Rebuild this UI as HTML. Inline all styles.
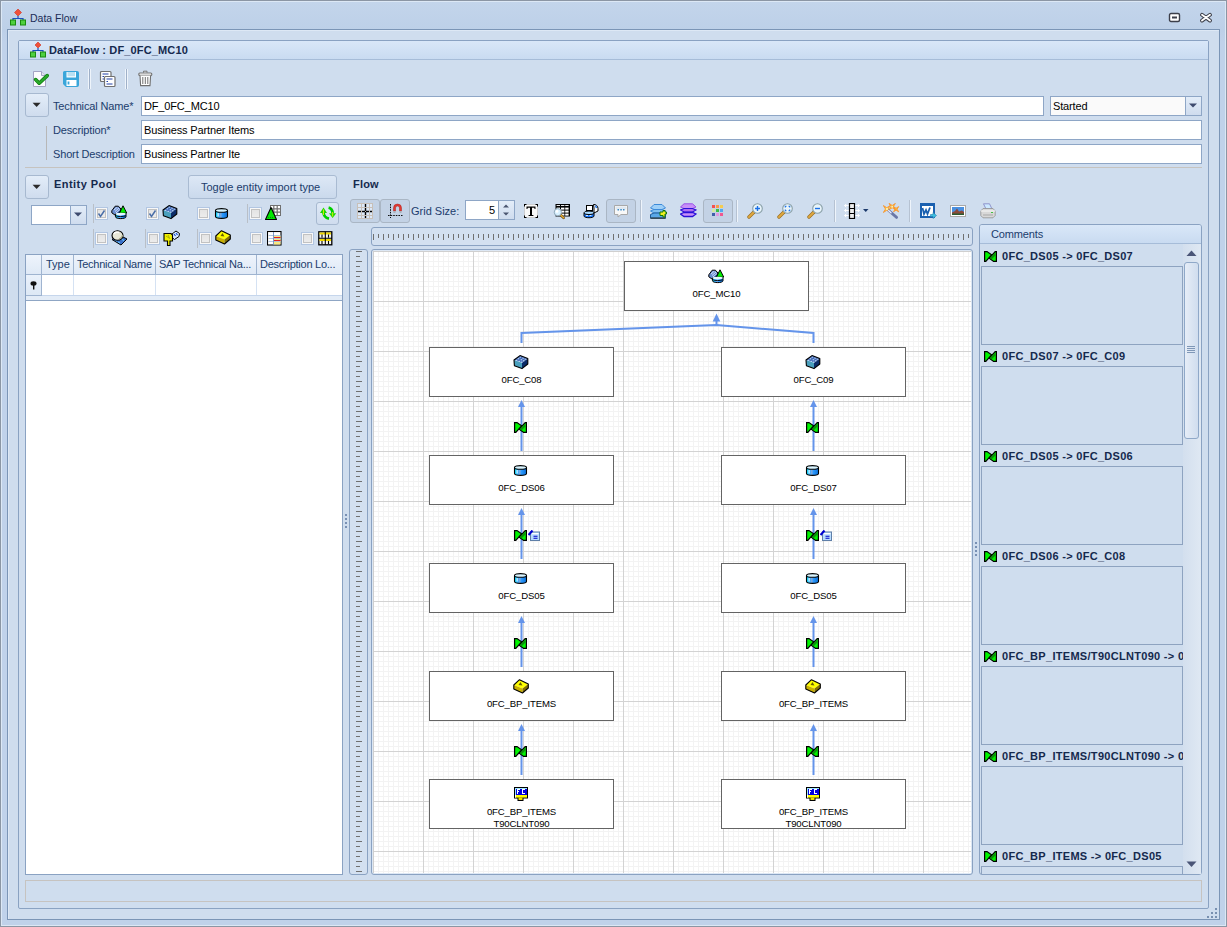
<!DOCTYPE html>
<html><head><meta charset="utf-8">
<style>
*{box-sizing:border-box;margin:0;padding:0}
html,body{width:1227px;height:927px;overflow:hidden;background:#cfddee;font-family:"Liberation Sans",sans-serif;font-size:11px;color:#203c6c}
.a{position:absolute}
.t{position:absolute;white-space:nowrap;line-height:15px}
.b{font-weight:bold}
.inp{position:absolute;background:#fff;border:1px solid #8ea6c6}
.sep{position:absolute;width:1px;background:#b9c3cf;border-right:1px solid #eef3f9}
.cb{position:absolute;width:13px;height:13px;border:1px solid #b2c6e2;background:linear-gradient(#e2e2e2,#eeeeee);box-shadow:inset 0 0 0 1px #f8f8f8,inset 0 0 0 2px #c2c2c2}
.btn{position:absolute;border:1px solid #a7b9d0;border-radius:3px;background:linear-gradient(#e3edf9,#cfdcee)}
.chk{position:absolute;border:1px solid #aab6c4;border-radius:3px;background:#c3d2e5}
.gh{letter-spacing:-0.25px}
.nl{font-size:9.6px;color:#000;line-height:12px;letter-spacing:-0.15px}
.ni{position:absolute;width:16px;height:16px}
.bt{position:absolute;width:13px;height:11px}
</style></head><body>

<svg width="0" height="0" style="position:absolute">
<defs>
<linearGradient id="g-cyl" x1="0" x2="1" y1="0" y2="0"><stop offset="0" stop-color="#10e8ff"/><stop offset="0.3" stop-color="#3aa8ff"/><stop offset="0.45" stop-color="#8aa8d8"/><stop offset="0.55" stop-color="#2e9cff"/><stop offset="1" stop-color="#0a6ed8"/></linearGradient>
<symbol id="i-bt" viewBox="0 0 13 11">
 <path d="M12.4 0.6 V10.4 H9.6 L5.2 7.2 L11.2 0.6Z" fill="#00f400" stroke="#000" stroke-width="1.2" stroke-linejoin="miter"/>
 <path d="M0.6 0.6 H3 L7.6 3.8 L1.8 10.4 H0.6Z" fill="#00f400" stroke="#000" stroke-width="1.2" stroke-linejoin="miter"/>
 <path d="M6 7 L11.4 1.4 V4.5 L7.5 8.5Z" fill="#0c8e0c"/>
</symbol>
<symbol id="i-cube" viewBox="0 0 16 16">
 <path d="M1 5 L7 0.6 L14.8 3.6 L9 7.8Z" fill="#3d66b6"/>
 <path d="M1 5 L9 7.8 L9 13.6 L1.4 10.7Z" fill="#4aa0bd"/>
 <path d="M9 7.8 L14.8 3.6 L14.8 9 L9 13.6Z" fill="#0c2c68"/>
 <g fill="#cfe6ff"><rect x="6.5" y="1.6" width="1.6" height="1"/><rect x="9.3" y="2.6" width="1.6" height="1"/><rect x="11.6" y="3.6" width="1.6" height="1"/><rect x="4.6" y="3.3" width="1.6" height="1"/><rect x="7.6" y="4.3" width="1.6" height="1"/><rect x="9.9" y="5.3" width="1.6" height="1"/><rect x="2.8" y="4.8" width="1.6" height="1"/><rect x="5.6" y="5.8" width="1.6" height="1"/><rect x="7.9" y="6.6" width="1.6" height="1"/></g>
 <path d="M1 5 L7 0.6 L14.8 3.6 L14.8 9 L9 13.6 L1.4 10.7Z" fill="none" stroke="#000" stroke-width="1.1" stroke-linejoin="round"/>
</symbol>
<symbol id="i-ds" viewBox="0 0 16 16">
 <path d="M1.5 4.5 V10.5 C1.5 13 13.5 13 13.5 10.5 V4.5Z" fill="url(#g-cyl)"/>
 <ellipse cx="7.5" cy="4.3" rx="6" ry="2" fill="#d8f4ff"/>
 <path d="M1.5 4.5 V10.5 C1.5 13 13.5 13 13.5 10.5 V4.5 C13.5 2 1.5 2 1.5 4.5Z M1.5 4.8 C1.5 6.8 13.5 6.8 13.5 4.8" fill="none" stroke="#000" stroke-width="1.1"/>
 <rect x="3.6" y="7" width="1" height="3.5" fill="#fff"/>
</symbol>
<symbol id="i-src" viewBox="0 0 16 16">
 <path d="M0.8 6 L6.5 0.7 L15.3 5 L9.5 9.5Z" fill="#ffff00"/>
 <path d="M0.8 6 L9.5 9.5 L9.5 14 L0.8 10Z" fill="#c9b000"/>
 <path d="M9.5 9.5 L15.3 5 L15.3 9 L9.5 14Z" fill="#857000"/>
 <path d="M5.5 6 L7.5 3 L9.5 6.5Z" fill="#6a6000"/>
 <path d="M0.8 6 L6.5 0.7 L15.3 5 L15.3 9 L9.5 14 L0.8 10Z" fill="none" stroke="#000" stroke-width="1.1" stroke-linejoin="round"/>
</symbol>
<symbol id="i-fc" viewBox="0 0 16 16">
 <path d="M1 0 H15 V11.5 H10.5 V14 H4.5 V11.5 H1Z" fill="#000"/>
 <rect x="2" y="1" width="12" height="7" fill="#0000e0"/>
 <rect x="2" y="1" width="12" height="1" fill="#a0e8ff"/>
 <rect x="2" y="1" width="1" height="7" fill="#a0e8ff"/>
 <rect x="2" y="8" width="12" height="2.6" fill="#ffff00"/>
 <rect x="5.5" y="10.5" width="4" height="2.5" fill="#f0e000"/>
 <rect x="2" y="8" width="1" height="2.6" fill="#fff"/>
 <g fill="#fff"><rect x="4" y="2" width="1" height="5"/><rect x="4" y="2" width="3" height="1"/><rect x="4" y="4" width="2" height="1"/>
 <rect x="9" y="2" width="1" height="5"/><rect x="9" y="2" width="3" height="1"/><rect x="9" y="6" width="3" height="1"/></g>
</symbol>
<symbol id="i-mc" viewBox="0 0 16 16">
 <path d="M0.8 5.8 L4.2 1.2 L7.4 1.2 L10 4 L9.2 8.6 L5.6 11.2 L0.8 7.8Z" fill="#6a8ed0"/>
 <path d="M5.6 11.2 L9.2 8.6 L10 4 L6 8Z" fill="#123a80"/>
 <path d="M3 5 L6.5 2 M4 6.5 L8 3 M5 8 L9 4.5" stroke="#dce8ff" stroke-width="0.9"/>
 <path d="M0.8 5.8 L4.2 1.2 L7.4 1.2 L10 4 L9.2 8.6 L5.6 11.2 L0.8 7.8Z" fill="none" stroke="#000" stroke-width="1"/>
 <path d="M12 0.8 L15.8 8.2 H8.4Z" fill="#00f000" stroke="#000" stroke-width="1" stroke-linejoin="round"/>
 <path d="M4.5 9 V11.8 C4.5 14.2 15 14.2 15 11.8 V9Z" fill="url(#g-cyl)" stroke="#000" stroke-width="1"/>
 <ellipse cx="9.75" cy="9.1" rx="5.1" ry="1.3" fill="#e4f8ff"/>
 <path d="M4.8 10.8 C7 11.8 12 11.8 14.7 10.8" stroke="#000" stroke-width="0.9" fill="none"/>
</symbol>
<symbol id="i-cmt" viewBox="0 0 12 11">
 <rect x="2.5" y="2" width="9" height="8.5" fill="#b8dcff" stroke="#5f7fa8"/>
 <rect x="3.5" y="3" width="7" height="1.2" fill="#fff"/>
 <path d="M0.5 5 L4.5 0.5" stroke="#0000d0" stroke-width="2.2"/>
 <path d="M5.5 6.2 H9.5 M5.5 8.2 H9.5" stroke="#0000c8" stroke-width="1.1"/>
</symbol>
</defs></svg>

<!-- window frame -->
<div class="a" style="left:0;top:0;width:1227px;height:927px;border:1px solid #8b96a4"></div>
<div class="a" style="left:1px;top:1px;width:1225px;height:925px;border:1px solid #dce8f5;background:linear-gradient(#c3d5eb,#bdd0e8 28px,#c0d2ea 40px)"></div>
<!-- title -->
<svg class="a" style="left:9px;top:8px" width="18" height="18" viewBox="0 0 18 18">
 <path d="M9 1 L12.5 4.5 L9 8 L5.5 4.5Z" fill="#f0503a" stroke="#d03020" stroke-width="0.6"/>
 <path d="M9 8 V10 M4 14 V10.5 H14 V14" stroke="#1a4fc0" stroke-width="1.2" fill="none"/>
 <rect x="1.5" y="12" width="5" height="5" fill="#4fd040" stroke="#1a8a10"/>
 <rect x="11.5" y="12" width="5" height="5" fill="#4fd040" stroke="#1a8a10"/>
</svg>
<div class="t" style="left:30px;top:11px;color:#1b2d57;font-size:10.5px">Data Flow</div>
<svg class="a" style="left:1168px;top:12px" width="13" height="11"><rect x="1.5" y="1.5" width="10" height="8" rx="1.5" fill="#fff" stroke="#3c3f4a" stroke-width="1.4"/><rect x="4" y="4.5" width="5" height="2" fill="#3c3f4a"/></svg>
<svg class="a" style="left:1199px;top:12px" width="14" height="11"><path d="M3 2.8 L11 8.6 M11 2.8 L3 8.6" stroke="#3c3f4a" stroke-width="3.8" stroke-linecap="round"/><path d="M3 2.8 L11 8.6 M11 2.8 L3 8.6" stroke="#fff" stroke-width="1.8" stroke-linecap="round"/></svg>

<!-- client area -->
<div class="a" style="left:7px;top:29px;width:1213px;height:891px;border:1px solid #7b95b6;background:#cfddee"></div>
<div class="a" style="left:8px;top:30px;width:1211px;height:889px;border-top:1px solid #dde8f5;border-left:1px solid #dde8f5"></div>

<!-- group panel -->
<div class="a" style="left:18px;top:40px;width:1191px;height:869px;border:1px solid #8aa2c2;border-radius:2px;background:#cfddee"></div>
<div class="a" style="left:19px;top:41px;width:1189px;height:19px;background:linear-gradient(#d9e7f8,#c9dbf1);border-bottom:1px solid #a6bcd8"></div>
<svg class="a" style="left:29px;top:41px" width="18" height="17" viewBox="0 0 18 17">
 <path d="M9 1 L12 4 L9 7 L6 4Z" fill="#f0503a" stroke="#d03020" stroke-width="0.6"/>
 <path d="M9 7 V9 M4 13 V9.5 H14 V13" stroke="#1a4fc0" stroke-width="1.2" fill="none"/>
 <rect x="1.5" y="11" width="5" height="5" fill="#4fd040" stroke="#1a8a10"/>
 <rect x="11.5" y="11" width="5" height="5" fill="#4fd040" stroke="#1a8a10"/>
</svg>
<div class="t b" style="left:49px;top:43px;color:#15294d;letter-spacing:0.15px">DataFlow : DF_0FC_MC10</div>

<!-- doc toolbar -->
<svg class="a" style="left:32px;top:70px" width="18" height="18" viewBox="0 0 18 18">
 <path d="M1.5 1.5 H9.5 L13.5 5.5 V16.5 H1.5Z" fill="#fbfbfd" stroke="#a3a3c3" stroke-width="1"/>
 <path d="M9.5 1.5 V5.5 H13.5" fill="#e6e6f0" stroke="#a3a3c3" stroke-width="1"/>
 <path d="M3.6 9.6 L7.2 13.2 L15.2 5.6" stroke="#0a7a0a" stroke-width="3.6" fill="none" stroke-linecap="round" stroke-linejoin="round"/>
 <path d="M3.6 9.6 L7.2 13.2 L15.2 5.6" stroke="#2aa82a" stroke-width="2.2" fill="none" stroke-linecap="round" stroke-linejoin="round"/>
</svg>
<svg class="a" style="left:62px;top:70px" width="18" height="18" viewBox="0 0 18 18">
 <path d="M2.5 1 H15 A2 2 0 0 1 17 3 V15 A2 2 0 0 1 15 17 H4 L1 14 V2.5 A1.5 1.5 0 0 1 2.5 1Z" fill="#3aa6da"/>
 <rect x="4.5" y="2" width="9.5" height="5.5" fill="#fff"/>
 <rect x="5.5" y="2" width="7.5" height="4.3" fill="#b9e0f2"/>
 <rect x="4.5" y="10" width="10" height="6" fill="#fff"/>
 <rect x="5.6" y="11.5" width="1.8" height="3" fill="#3aa6da"/>
</svg>
<div class="a" style="left:89px;top:69px;width:1px;height:20px;background:#9fb0c8;box-shadow:-1px 0 0 #eef4fb,1px 0 0 #eef4fb"></div>
<svg class="a" style="left:99px;top:70px" width="18" height="18" viewBox="0 0 18 18">
 <rect x="1.5" y="1.5" width="10.5" height="10" rx="1" fill="#fff" stroke="#707070" stroke-width="1.2"/>
 <path d="M3.5 4 H9.5 M3.5 6.5 H5 M3.5 9 H5" stroke="#2040a8" stroke-width="1.1"/>
 <rect x="5.5" y="6.5" width="10.5" height="10" rx="1" fill="#fff" stroke="#707070" stroke-width="1.2"/>
 <path d="M7.5 9 H13.5 M7.5 11.5 H9 M7.5 14 H13.5" stroke="#2040a8" stroke-width="1.1"/>
</svg>
<div class="a" style="left:126px;top:69px;width:1px;height:20px;background:#9fb0c8;box-shadow:-1px 0 0 #eef4fb,1px 0 0 #eef4fb"></div>
<svg class="a" style="left:137px;top:70px" width="17" height="17" viewBox="0 0 17 17">
 <path d="M6.5 2.6 V1.2 H10 V2.6" fill="#fff" stroke="#707070" stroke-width="1"/>
 <rect x="1.8" y="3" width="13" height="2.4" rx="1" fill="#fff" stroke="#707070" stroke-width="1.1"/>
 <path d="M3 5.5 L3.6 15.6 H13 L13.6 5.5" fill="#fff" stroke="#707070" stroke-width="1.1"/>
 <path d="M5.8 7 V14 M8.3 7 V14 M10.8 7 V14" stroke="#707070" stroke-width="1"/>
</svg>


<!-- form -->
<div class="btn" style="left:25px;top:93px;width:24px;height:24px"></div>
<svg class="a" style="left:32px;top:102px" width="10" height="6"><path d="M0.6 0.8 H8.6 L4.6 5Z" fill="#2b2b2b"/></svg>
<div class="t" style="left:53px;top:99px;letter-spacing:-0.15px">Technical Name*</div>
<div class="a" style="left:46px;top:126px;width:1px;height:34px;background:#b7b7b7"></div>
<div class="t" style="left:53px;top:123px;letter-spacing:-0.15px">Description*</div>
<div class="t" style="left:53px;top:147px;letter-spacing:-0.15px">Short Description</div>
<div class="inp" style="left:141px;top:96px;width:903px;height:20px"></div>
<div class="t" style="left:144px;top:99px;color:#000;letter-spacing:-0.15px">DF_0FC_MC10</div>
<div class="inp" style="left:1050px;top:96px;width:152px;height:20px;background:#fafafa"></div>
<div class="a" style="left:1185px;top:97px;width:16px;height:18px;border-left:1px solid #8ea6c6;background:linear-gradient(#e3edf9,#cfdcee)"></div>
<svg class="a" style="left:1188px;top:103px" width="10" height="6"><path d="M1 0.5 H9 L5 4.5Z" fill="#3d4a6e"/></svg>
<div class="t" style="left:1053px;top:99px;color:#000;letter-spacing:-0.15px">Started</div>
<div class="inp" style="left:141px;top:120px;width:1061px;height:20px"></div>
<div class="t" style="left:144px;top:123px;color:#000;letter-spacing:-0.15px">Business Partner Items</div>
<div class="inp" style="left:141px;top:144px;width:1061px;height:20px"></div>
<div class="t" style="left:144px;top:147px;color:#000;letter-spacing:-0.15px">Business Partner Ite</div>
<div class="a" style="left:25px;top:167px;width:1177px;height:1px;background:#c6c3bf"></div>

<!-- entity pool -->
<div class="btn" style="left:25px;top:175px;width:24px;height:24px"></div>
<svg class="a" style="left:32px;top:184px" width="10" height="6"><path d="M0.6 0.8 H8.6 L4.6 5Z" fill="#2b2b2b"/></svg>
<div class="t b" style="left:54px;top:177px;color:#15294d;letter-spacing:0.45px">Entity Pool</div>
<div class="btn" style="left:188px;top:175px;width:149px;height:24px;border-color:#a9bbd2;background:linear-gradient(#dde8f6,#cad9ec)"></div>
<div class="t" style="left:201px;top:180px;color:#203c6c">Toggle entity import type</div>
<!-- combo -->
<div class="inp" style="left:31px;top:205px;width:56px;height:20px"></div>
<div class="a" style="left:70px;top:206px;width:16px;height:18px;border-left:1px solid #8ea6c6;background:linear-gradient(#e3edf9,#cfdcee)"></div>
<svg class="a" style="left:73px;top:212px" width="10" height="6"><path d="M1 0.5 H9 L5 4.5Z" fill="#3d4a6e"/></svg>
<div class="a" style="left:93px;top:204px;width:1px;height:19px;background:#b9bfc7"></div>
<div class="a" style="left:93px;top:229px;width:1px;height:19px;background:#b9bfc7"></div>
<div class="a" style="left:145px;top:229px;width:1px;height:19px;background:#b9bfc7"></div>
<div class="a" style="left:197px;top:229px;width:1px;height:19px;background:#b9bfc7"></div>
<div class="a" style="left:247px;top:204px;width:1px;height:19px;background:#b9bfc7"></div>
<!-- row1 checkboxes -->
<div class="cb" style="left:95px;top:207px"></div>
<svg class="a" style="left:97px;top:209px" width="9" height="9"><path d="M1.5 4.5 L3.5 7.5 L7.5 1.5" stroke="#4a6ea8" stroke-width="1.5" fill="none"/></svg>
<div class="cb" style="left:146px;top:207px"></div>
<svg class="a" style="left:148px;top:209px" width="9" height="9"><path d="M1.5 4.5 L3.5 7.5 L7.5 1.5" stroke="#4a6ea8" stroke-width="1.5" fill="none"/></svg>
<div class="cb" style="left:197px;top:207px"></div>
<div class="cb" style="left:249px;top:207px"></div>
<!-- row2 -->
<div class="cb" style="left:95px;top:232px"></div>
<div class="cb" style="left:147px;top:232px"></div>
<div class="cb" style="left:199px;top:232px"></div>
<div class="cb" style="left:250px;top:232px"></div>
<div class="cb" style="left:301px;top:232px"></div>
<!-- icons -->
<svg class="a" style="left:111px;top:205px" width="16" height="16"><use href="#i-mc"/></svg>
<svg class="a" style="left:162px;top:205px" width="16" height="16"><use href="#i-cube"/></svg>
<svg class="a" style="left:214px;top:206px" width="16" height="16"><use href="#i-ds"/></svg>
<svg class="a" style="left:265px;top:205px" width="16" height="16" viewBox="0 0 16 16">
 <rect x="5.5" y="0.5" width="10" height="10" fill="#fff" stroke="#707070"/>
 <path d="M8.8 0.5V10.5 M12.2 0.5V10.5 M5.5 3.8H15.5 M5.5 7.2H15.5" stroke="#707070" stroke-width="1.2"/>
 <path d="M6 2.5 L11.5 14.5 H0.5Z" fill="#00e800" stroke="#000" stroke-width="1.1" stroke-linejoin="round"/>
 <path d="M3 12.5 H9.5" stroke="#108010" stroke-width="1.2" stroke-dasharray="1 1"/>
</svg>
<svg class="a" style="left:111px;top:230px" width="16" height="16" viewBox="0 0 16 16">
 <path d="M1 9.5 L10 15 L16 9 L8 5Z" fill="#3a70c8" stroke="#000" stroke-width="1"/>
 <path d="M4 10 L6 11.2 M7 12 L9 13 M8 8 L10 9 M11 9.5 L13 10.5" stroke="#70d0ff" stroke-width="1"/>
 <ellipse cx="6.5" cy="5.5" rx="5.5" ry="4.8" fill="#e8e8d8" stroke="#000" stroke-width="1.1"/>
 <path d="M3 4 A3.5 3 0 0 1 8 2.5" stroke="#fff" stroke-width="1.4" fill="none"/>
 <path d="M8 9 A5 4.5 0 0 0 11.5 5" stroke="#a8a888" stroke-width="1.2" fill="none"/>
</svg>
<svg class="a" style="left:163px;top:230px" width="17" height="17" viewBox="0 0 17 17">
 <path d="M9 4 L13 1 L16.5 3.5 L16 6.5 L11.5 9.5 L8.5 7Z" fill="#d8e8ff" stroke="#000" stroke-width="1"/>
 <path d="M11 4 L12.5 6 M13 3 L14.5 5" stroke="#1a50d0" stroke-width="1.2"/>
 <path d="M1 3.5 H8 L9.5 5 V11 H7 V15.5 H4.5 V11 H1Z" fill="#f0f000" stroke="#000" stroke-width="1.1"/>
 <path d="M3 6 L6 8 M5 5 L7 9" stroke="#a0a000" stroke-width="0.8"/>
</svg>
<svg class="a" style="left:215px;top:230px" width="16" height="16"><use href="#i-src"/></svg>
<svg class="a" style="left:267px;top:231px" width="15" height="15" viewBox="0 0 15 15">
 <rect x="0.5" y="0.5" width="13.5" height="13.5" fill="#fff" stroke="#000" stroke-width="1.1"/>
 <rect x="7" y="5" width="6.5" height="8.5" fill="#f8e880"/>
 <path d="M1.5 4.5H13.5 M1.5 7.5H13.5 M1.5 10.5H13.5" stroke="#a8c0e0" stroke-width="0.9"/>
 <path d="M7 6.5H13.5 M7 9.5H13.5" stroke="#e02020" stroke-width="1.1"/>
 <path d="M6.5 1V14" stroke="#7090c0" stroke-width="0.9"/>
</svg>
<svg class="a" style="left:318px;top:231px" width="15" height="15" viewBox="0 0 15 15">
 <rect x="0.8" y="0.8" width="13" height="13" fill="#f4f4f4" stroke="#000" stroke-width="1.3"/>
 <rect x="1.5" y="1.5" width="11.5" height="2" fill="#f0d800"/>
 <rect x="1.5" y="8" width="11.5" height="2" fill="#f0d800"/>
 <path d="M7.3 0.8V14 M0.8 7.3H14 M4 3.5 V6.5 M10.5 3.5 V6.5 M4 10 V13 M10.5 10 V13" stroke="#000" stroke-width="1.1"/>
</svg>

<div class="btn" style="left:316px;top:202px;width:23px;height:23px;background:linear-gradient(#dfe9f6,#cfdcee)"></div>
<svg class="a" style="left:319px;top:205px" width="18" height="17" viewBox="0 0 18 17">
 <path d="M4.5 7.5 Q4.8 12.5 10 13.6" stroke="#00d000" stroke-width="2.8" fill="none"/>
 <path d="M4.5 2.6 L1 8 H8Z" fill="#20d800"/>
 <path d="M4.5 4.5 V10" stroke="#c8f000" stroke-width="1"/>
 <path d="M9.6 2.6 Q13.6 3.5 13.6 8.5" stroke="#00d000" stroke-width="2.8" fill="none"/>
 <path d="M13.6 13 L17.2 8.2 H10Z" fill="#20d800"/>
 <path d="M13.6 7 V11.5" stroke="#c8f000" stroke-width="1"/>
</svg>
<!-- grid -->
<div class="a" style="left:25px;top:254px;width:318px;height:621px;border:1px solid #8aa2c2;background:#fff"></div>
<div class="a" style="left:26px;top:255px;width:316px;height:20px;background:linear-gradient(#eef4fc,#dfe9f6);border-bottom:1px solid #9fb4d0"></div>
<div class="a" style="left:26px;top:275px;width:16px;height:21px;background:linear-gradient(#eaf1fb,#dde8f5);border-right:1px solid #9fb4d0;border-bottom:1px solid #9fb4d0"></div>
<div class="a" style="left:41px;top:255px;width:1px;height:20px;background:#9fb4d0"></div>
<div class="a" style="left:73px;top:255px;width:1px;height:20px;background:#9fb4d0"></div>
<div class="a" style="left:155px;top:255px;width:1px;height:20px;background:#9fb4d0"></div>
<div class="a" style="left:256px;top:255px;width:1px;height:20px;background:#9fb4d0"></div>
<div class="a" style="left:73px;top:275px;width:1px;height:20px;background:#d5e2f3"></div>
<div class="a" style="left:155px;top:275px;width:1px;height:20px;background:#d5e2f3"></div>
<div class="a" style="left:256px;top:275px;width:1px;height:20px;background:#d5e2f3"></div>
<div class="a" style="left:42px;top:295px;width:300px;height:1px;background:#c6d6ec"></div>
<div class="a" style="left:26px;top:296px;width:316px;height:5px;background:#e3ecf7;border-bottom:1px solid #8fa6c4"></div>
<div class="t" style="left:46px;top:257px">Type</div>
<div class="t gh" style="left:77px;top:257px">Technical Name</div>
<div class="t gh" style="left:159px;top:257px">SAP Technical Na...</div>
<div class="t gh" style="left:260px;top:257px">Description Lo...</div>
<svg class="a" style="left:30px;top:281px" width="7" height="9"><ellipse cx="3.5" cy="2.5" rx="3" ry="2.2" fill="#111"/><rect x="3" y="3" width="1.4" height="5.5" fill="#111"/></svg>


<!-- flow -->
<div class="t b" style="left:353px;top:177px;color:#15294d;letter-spacing:0.2px">Flow</div>
<div class="chk" style="left:350px;top:199px;width:30px;height:24px"></div>
<div class="chk" style="left:380px;top:199px;width:30px;height:24px"></div>
<div class="chk" style="left:606px;top:199px;width:30px;height:24px"></div>
<div class="chk" style="left:703px;top:199px;width:30px;height:24px"></div>
<div class="t" style="left:411px;top:204px;color:#203c6c">Grid Size:</div>
<div class="inp" style="left:465px;top:200px;width:50px;height:20px"></div>
<div class="a" style="left:498px;top:201px;width:16px;height:18px;border-left:1px solid #8ea6c6;background:linear-gradient(#e3edf9,#cfdcee)"></div>
<svg class="a" style="left:502px;top:203px" width="8" height="14"><path d="M1 4.5 L4 1.5 L7 4.5Z M1 9.5 L4 12.5 L7 9.5Z" fill="#4a5670"/></svg>
<div class="t" style="left:489px;top:203px;color:#000">5</div>
<div class="a" style="left:640px;top:200px;width:1px;height:22px;background:#b6c2d2;box-shadow:1px 0 0 #eef4fb"></div>
<div class="a" style="left:736px;top:200px;width:1px;height:22px;background:#b6c2d2;box-shadow:1px 0 0 #eef4fb"></div>
<div class="a" style="left:834px;top:200px;width:1px;height:22px;background:#b6c2d2;box-shadow:1px 0 0 #eef4fb"></div>
<div class="a" style="left:909px;top:200px;width:1px;height:22px;background:#b6c2d2;box-shadow:1px 0 0 #eef4fb"></div>
<div class="a" style="left:371px;top:227px;width:602px;height:19px;border:1px solid #8aa2c2;border-radius:3px;background:#d3e0f0"></div>
<svg class="a" style="left:371px;top:227px" width="602" height="19"><g fill="#707070"><rect x="2" y="7" width="1" height="6"/><rect x="7" y="7" width="1" height="4"/><rect x="12" y="7" width="1" height="6"/><rect x="17" y="7" width="1" height="4"/><rect x="22" y="7" width="1" height="6"/><rect x="27" y="7" width="1" height="4"/><rect x="32" y="7" width="1" height="6"/><rect x="37" y="7" width="1" height="4"/><rect x="42" y="7" width="1" height="6"/><rect x="47" y="7" width="1" height="4"/><rect x="52" y="7" width="1" height="6"/><rect x="57" y="7" width="1" height="4"/><rect x="62" y="7" width="1" height="6"/><rect x="67" y="7" width="1" height="4"/><rect x="72" y="7" width="1" height="6"/><rect x="77" y="7" width="1" height="4"/><rect x="82" y="7" width="1" height="6"/><rect x="87" y="7" width="1" height="4"/><rect x="92" y="7" width="1" height="6"/><rect x="97" y="7" width="1" height="4"/><rect x="102" y="7" width="1" height="6"/><rect x="107" y="7" width="1" height="4"/><rect x="112" y="7" width="1" height="6"/><rect x="117" y="7" width="1" height="4"/><rect x="122" y="7" width="1" height="6"/><rect x="127" y="7" width="1" height="4"/><rect x="132" y="7" width="1" height="6"/><rect x="137" y="7" width="1" height="4"/><rect x="142" y="7" width="1" height="6"/><rect x="147" y="7" width="1" height="4"/><rect x="152" y="7" width="1" height="6"/><rect x="157" y="7" width="1" height="4"/><rect x="162" y="7" width="1" height="6"/><rect x="167" y="7" width="1" height="4"/><rect x="172" y="7" width="1" height="6"/><rect x="177" y="7" width="1" height="4"/><rect x="182" y="7" width="1" height="6"/><rect x="187" y="7" width="1" height="4"/><rect x="192" y="7" width="1" height="6"/><rect x="197" y="7" width="1" height="4"/><rect x="202" y="7" width="1" height="6"/><rect x="207" y="7" width="1" height="4"/><rect x="212" y="7" width="1" height="6"/><rect x="217" y="7" width="1" height="4"/><rect x="222" y="7" width="1" height="6"/><rect x="227" y="7" width="1" height="4"/><rect x="232" y="7" width="1" height="6"/><rect x="237" y="7" width="1" height="4"/><rect x="242" y="7" width="1" height="6"/><rect x="247" y="7" width="1" height="4"/><rect x="252" y="7" width="1" height="6"/><rect x="257" y="7" width="1" height="4"/><rect x="262" y="7" width="1" height="6"/><rect x="267" y="7" width="1" height="4"/><rect x="272" y="7" width="1" height="6"/><rect x="277" y="7" width="1" height="4"/><rect x="282" y="7" width="1" height="6"/><rect x="287" y="7" width="1" height="4"/><rect x="292" y="7" width="1" height="6"/><rect x="297" y="7" width="1" height="4"/><rect x="302" y="7" width="1" height="6"/><rect x="307" y="7" width="1" height="4"/><rect x="312" y="7" width="1" height="6"/><rect x="317" y="7" width="1" height="4"/><rect x="322" y="7" width="1" height="6"/><rect x="327" y="7" width="1" height="4"/><rect x="332" y="7" width="1" height="6"/><rect x="337" y="7" width="1" height="4"/><rect x="342" y="7" width="1" height="6"/><rect x="347" y="7" width="1" height="4"/><rect x="352" y="7" width="1" height="6"/><rect x="357" y="7" width="1" height="4"/><rect x="362" y="7" width="1" height="6"/><rect x="367" y="7" width="1" height="4"/><rect x="372" y="7" width="1" height="6"/><rect x="377" y="7" width="1" height="4"/><rect x="382" y="7" width="1" height="6"/><rect x="387" y="7" width="1" height="4"/><rect x="392" y="7" width="1" height="6"/><rect x="397" y="7" width="1" height="4"/><rect x="402" y="7" width="1" height="6"/><rect x="407" y="7" width="1" height="4"/><rect x="412" y="7" width="1" height="6"/><rect x="417" y="7" width="1" height="4"/><rect x="422" y="7" width="1" height="6"/><rect x="427" y="7" width="1" height="4"/><rect x="432" y="7" width="1" height="6"/><rect x="437" y="7" width="1" height="4"/><rect x="442" y="7" width="1" height="6"/><rect x="447" y="7" width="1" height="4"/><rect x="452" y="7" width="1" height="6"/><rect x="457" y="7" width="1" height="4"/><rect x="462" y="7" width="1" height="6"/><rect x="467" y="7" width="1" height="4"/><rect x="472" y="7" width="1" height="6"/><rect x="477" y="7" width="1" height="4"/><rect x="482" y="7" width="1" height="6"/><rect x="487" y="7" width="1" height="4"/><rect x="492" y="7" width="1" height="6"/><rect x="497" y="7" width="1" height="4"/><rect x="502" y="7" width="1" height="6"/><rect x="507" y="7" width="1" height="4"/><rect x="512" y="7" width="1" height="6"/><rect x="517" y="7" width="1" height="4"/><rect x="522" y="7" width="1" height="6"/><rect x="527" y="7" width="1" height="4"/><rect x="532" y="7" width="1" height="6"/><rect x="537" y="7" width="1" height="4"/><rect x="542" y="7" width="1" height="6"/><rect x="547" y="7" width="1" height="4"/><rect x="552" y="7" width="1" height="6"/><rect x="557" y="7" width="1" height="4"/><rect x="562" y="7" width="1" height="6"/><rect x="567" y="7" width="1" height="4"/><rect x="572" y="7" width="1" height="6"/><rect x="577" y="7" width="1" height="4"/><rect x="582" y="7" width="1" height="6"/><rect x="587" y="7" width="1" height="4"/><rect x="592" y="7" width="1" height="6"/><rect x="597" y="7" width="1" height="4"/></g></svg>
<div class="a" style="left:349px;top:249px;width:19px;height:626px;border:1px solid #8aa2c2;border-radius:3px;background:#d3e0f0"></div>
<svg class="a" style="left:349px;top:249px" width="19" height="626"><g fill="#707070"><rect x="7" y="2" width="6" height="1"/><rect x="7" y="7" width="4" height="1"/><rect x="7" y="12" width="6" height="1"/><rect x="7" y="17" width="4" height="1"/><rect x="7" y="22" width="6" height="1"/><rect x="7" y="27" width="4" height="1"/><rect x="7" y="32" width="6" height="1"/><rect x="7" y="37" width="4" height="1"/><rect x="7" y="42" width="6" height="1"/><rect x="7" y="47" width="4" height="1"/><rect x="7" y="52" width="6" height="1"/><rect x="7" y="57" width="4" height="1"/><rect x="7" y="62" width="6" height="1"/><rect x="7" y="67" width="4" height="1"/><rect x="7" y="72" width="6" height="1"/><rect x="7" y="77" width="4" height="1"/><rect x="7" y="82" width="6" height="1"/><rect x="7" y="87" width="4" height="1"/><rect x="7" y="92" width="6" height="1"/><rect x="7" y="97" width="4" height="1"/><rect x="7" y="102" width="6" height="1"/><rect x="7" y="107" width="4" height="1"/><rect x="7" y="112" width="6" height="1"/><rect x="7" y="117" width="4" height="1"/><rect x="7" y="122" width="6" height="1"/><rect x="7" y="127" width="4" height="1"/><rect x="7" y="132" width="6" height="1"/><rect x="7" y="137" width="4" height="1"/><rect x="7" y="142" width="6" height="1"/><rect x="7" y="147" width="4" height="1"/><rect x="7" y="152" width="6" height="1"/><rect x="7" y="157" width="4" height="1"/><rect x="7" y="162" width="6" height="1"/><rect x="7" y="167" width="4" height="1"/><rect x="7" y="172" width="6" height="1"/><rect x="7" y="177" width="4" height="1"/><rect x="7" y="182" width="6" height="1"/><rect x="7" y="187" width="4" height="1"/><rect x="7" y="192" width="6" height="1"/><rect x="7" y="197" width="4" height="1"/><rect x="7" y="202" width="6" height="1"/><rect x="7" y="207" width="4" height="1"/><rect x="7" y="212" width="6" height="1"/><rect x="7" y="217" width="4" height="1"/><rect x="7" y="222" width="6" height="1"/><rect x="7" y="227" width="4" height="1"/><rect x="7" y="232" width="6" height="1"/><rect x="7" y="237" width="4" height="1"/><rect x="7" y="242" width="6" height="1"/><rect x="7" y="247" width="4" height="1"/><rect x="7" y="252" width="6" height="1"/><rect x="7" y="257" width="4" height="1"/><rect x="7" y="262" width="6" height="1"/><rect x="7" y="267" width="4" height="1"/><rect x="7" y="272" width="6" height="1"/><rect x="7" y="277" width="4" height="1"/><rect x="7" y="282" width="6" height="1"/><rect x="7" y="287" width="4" height="1"/><rect x="7" y="292" width="6" height="1"/><rect x="7" y="297" width="4" height="1"/><rect x="7" y="302" width="6" height="1"/><rect x="7" y="307" width="4" height="1"/><rect x="7" y="312" width="6" height="1"/><rect x="7" y="317" width="4" height="1"/><rect x="7" y="322" width="6" height="1"/><rect x="7" y="327" width="4" height="1"/><rect x="7" y="332" width="6" height="1"/><rect x="7" y="337" width="4" height="1"/><rect x="7" y="342" width="6" height="1"/><rect x="7" y="347" width="4" height="1"/><rect x="7" y="352" width="6" height="1"/><rect x="7" y="357" width="4" height="1"/><rect x="7" y="362" width="6" height="1"/><rect x="7" y="367" width="4" height="1"/><rect x="7" y="372" width="6" height="1"/><rect x="7" y="377" width="4" height="1"/><rect x="7" y="382" width="6" height="1"/><rect x="7" y="387" width="4" height="1"/><rect x="7" y="392" width="6" height="1"/><rect x="7" y="397" width="4" height="1"/><rect x="7" y="402" width="6" height="1"/><rect x="7" y="407" width="4" height="1"/><rect x="7" y="412" width="6" height="1"/><rect x="7" y="417" width="4" height="1"/><rect x="7" y="422" width="6" height="1"/><rect x="7" y="427" width="4" height="1"/><rect x="7" y="432" width="6" height="1"/><rect x="7" y="437" width="4" height="1"/><rect x="7" y="442" width="6" height="1"/><rect x="7" y="447" width="4" height="1"/><rect x="7" y="452" width="6" height="1"/><rect x="7" y="457" width="4" height="1"/><rect x="7" y="462" width="6" height="1"/><rect x="7" y="467" width="4" height="1"/><rect x="7" y="472" width="6" height="1"/><rect x="7" y="477" width="4" height="1"/><rect x="7" y="482" width="6" height="1"/><rect x="7" y="487" width="4" height="1"/><rect x="7" y="492" width="6" height="1"/><rect x="7" y="497" width="4" height="1"/><rect x="7" y="502" width="6" height="1"/><rect x="7" y="507" width="4" height="1"/><rect x="7" y="512" width="6" height="1"/><rect x="7" y="517" width="4" height="1"/><rect x="7" y="522" width="6" height="1"/><rect x="7" y="527" width="4" height="1"/><rect x="7" y="532" width="6" height="1"/><rect x="7" y="537" width="4" height="1"/><rect x="7" y="542" width="6" height="1"/><rect x="7" y="547" width="4" height="1"/><rect x="7" y="552" width="6" height="1"/><rect x="7" y="557" width="4" height="1"/><rect x="7" y="562" width="6" height="1"/><rect x="7" y="567" width="4" height="1"/><rect x="7" y="572" width="6" height="1"/><rect x="7" y="577" width="4" height="1"/><rect x="7" y="582" width="6" height="1"/><rect x="7" y="587" width="4" height="1"/><rect x="7" y="592" width="6" height="1"/><rect x="7" y="597" width="4" height="1"/><rect x="7" y="602" width="6" height="1"/><rect x="7" y="607" width="4" height="1"/><rect x="7" y="612" width="6" height="1"/><rect x="7" y="617" width="4" height="1"/><rect x="7" y="622" width="6" height="1"/></g></svg>
<svg class="a" style="left:345px;top:514px" width="3" height="15"><g fill="#7890b4"><rect x="0" y="0" width="2" height="2"/><rect x="0" y="4" width="2" height="2"/><rect x="0" y="8" width="2" height="2"/><rect x="0" y="12" width="2" height="2"/></g></svg>
<svg class="a" style="left:975px;top:542px" width="3" height="15"><g fill="#7890b4"><rect x="0" y="0" width="2" height="2"/><rect x="0" y="4" width="2" height="2"/><rect x="0" y="8" width="2" height="2"/><rect x="0" y="12" width="2" height="2"/></g></svg>
<div class="a" style="left:371px;top:249px;width:602px;height:626px;border:1px solid #8aa2c2;border-radius:3px;background:#dce7f4"></div>
<svg class="a" style="left:373px;top:251px" width="598" height="622"><rect width="598" height="622" fill="#fff"/><path d="M5.5 0V622M10.5 0V622M15.5 0V622M20.5 0V622M25.5 0V622M30.5 0V622M35.5 0V622M40.5 0V622M45.5 0V622M55.5 0V622M60.5 0V622M65.5 0V622M70.5 0V622M75.5 0V622M80.5 0V622M85.5 0V622M90.5 0V622M95.5 0V622M105.5 0V622M110.5 0V622M115.5 0V622M120.5 0V622M125.5 0V622M130.5 0V622M135.5 0V622M140.5 0V622M145.5 0V622M155.5 0V622M160.5 0V622M165.5 0V622M170.5 0V622M175.5 0V622M180.5 0V622M185.5 0V622M190.5 0V622M195.5 0V622M205.5 0V622M210.5 0V622M215.5 0V622M220.5 0V622M225.5 0V622M230.5 0V622M235.5 0V622M240.5 0V622M245.5 0V622M255.5 0V622M260.5 0V622M265.5 0V622M270.5 0V622M275.5 0V622M280.5 0V622M285.5 0V622M290.5 0V622M295.5 0V622M305.5 0V622M310.5 0V622M315.5 0V622M320.5 0V622M325.5 0V622M330.5 0V622M335.5 0V622M340.5 0V622M345.5 0V622M355.5 0V622M360.5 0V622M365.5 0V622M370.5 0V622M375.5 0V622M380.5 0V622M385.5 0V622M390.5 0V622M395.5 0V622M405.5 0V622M410.5 0V622M415.5 0V622M420.5 0V622M425.5 0V622M430.5 0V622M435.5 0V622M440.5 0V622M445.5 0V622M455.5 0V622M460.5 0V622M465.5 0V622M470.5 0V622M475.5 0V622M480.5 0V622M485.5 0V622M490.5 0V622M495.5 0V622M505.5 0V622M510.5 0V622M515.5 0V622M520.5 0V622M525.5 0V622M530.5 0V622M535.5 0V622M540.5 0V622M545.5 0V622M555.5 0V622M560.5 0V622M565.5 0V622M570.5 0V622M575.5 0V622M580.5 0V622M585.5 0V622M590.5 0V622M595.5 0V622M0 5.5H598M0 10.5H598M0 15.5H598M0 20.5H598M0 25.5H598M0 30.5H598M0 35.5H598M0 40.5H598M0 45.5H598M0 55.5H598M0 60.5H598M0 65.5H598M0 70.5H598M0 75.5H598M0 80.5H598M0 85.5H598M0 90.5H598M0 95.5H598M0 105.5H598M0 110.5H598M0 115.5H598M0 120.5H598M0 125.5H598M0 130.5H598M0 135.5H598M0 140.5H598M0 145.5H598M0 155.5H598M0 160.5H598M0 165.5H598M0 170.5H598M0 175.5H598M0 180.5H598M0 185.5H598M0 190.5H598M0 195.5H598M0 205.5H598M0 210.5H598M0 215.5H598M0 220.5H598M0 225.5H598M0 230.5H598M0 235.5H598M0 240.5H598M0 245.5H598M0 255.5H598M0 260.5H598M0 265.5H598M0 270.5H598M0 275.5H598M0 280.5H598M0 285.5H598M0 290.5H598M0 295.5H598M0 305.5H598M0 310.5H598M0 315.5H598M0 320.5H598M0 325.5H598M0 330.5H598M0 335.5H598M0 340.5H598M0 345.5H598M0 355.5H598M0 360.5H598M0 365.5H598M0 370.5H598M0 375.5H598M0 380.5H598M0 385.5H598M0 390.5H598M0 395.5H598M0 405.5H598M0 410.5H598M0 415.5H598M0 420.5H598M0 425.5H598M0 430.5H598M0 435.5H598M0 440.5H598M0 445.5H598M0 455.5H598M0 460.5H598M0 465.5H598M0 470.5H598M0 475.5H598M0 480.5H598M0 485.5H598M0 490.5H598M0 495.5H598M0 505.5H598M0 510.5H598M0 515.5H598M0 520.5H598M0 525.5H598M0 530.5H598M0 535.5H598M0 540.5H598M0 545.5H598M0 555.5H598M0 560.5H598M0 565.5H598M0 570.5H598M0 575.5H598M0 580.5H598M0 585.5H598M0 590.5H598M0 595.5H598M0 605.5H598M0 610.5H598M0 615.5H598M0 620.5H598" stroke="#f3f3f3" stroke-width="1"/><path d="M0.5 0V622M50.5 0V622M100.5 0V622M150.5 0V622M200.5 0V622M250.5 0V622M300.5 0V622M350.5 0V622M400.5 0V622M450.5 0V622M500.5 0V622M550.5 0V622M0 0.5H598M0 50.5H598M0 100.5H598M0 150.5H598M0 200.5H598M0 250.5H598M0 300.5H598M0 350.5H598M0 400.5H598M0 450.5H598M0 500.5H598M0 550.5H598M0 600.5H598" stroke="#d3d3d3" stroke-width="1"/><path d="M0.5 0V622M0 0.5H598" stroke="#cfcfcf"/><rect x="251.5" y="10.5" width="184" height="49" fill="#fff" stroke="#646464"/><rect x="56.5" y="96.5" width="184" height="49" fill="#fff" stroke="#646464"/><rect x="348.5" y="96.5" width="184" height="49" fill="#fff" stroke="#646464"/><rect x="56.5" y="204.5" width="184" height="49" fill="#fff" stroke="#646464"/><rect x="348.5" y="204.5" width="184" height="49" fill="#fff" stroke="#646464"/><rect x="56.5" y="312.5" width="184" height="49" fill="#fff" stroke="#646464"/><rect x="348.5" y="312.5" width="184" height="49" fill="#fff" stroke="#646464"/><rect x="56.5" y="420.5" width="184" height="49" fill="#fff" stroke="#646464"/><rect x="348.5" y="420.5" width="184" height="49" fill="#fff" stroke="#646464"/><rect x="56.5" y="528.5" width="184" height="49" fill="#fff" stroke="#646464"/><rect x="348.5" y="528.5" width="184" height="49" fill="#fff" stroke="#646464"/><path d="M148.5 200V154" stroke="#6494ea" stroke-width="2"/><path d="M148.5 149 L152.0 156 L145.0 156Z" fill="#6494ea"/><path d="M148.5 308V262" stroke="#6494ea" stroke-width="2"/><path d="M148.5 257 L152.0 264 L145.0 264Z" fill="#6494ea"/><path d="M148.5 416V370" stroke="#6494ea" stroke-width="2"/><path d="M148.5 365 L152.0 372 L145.0 372Z" fill="#6494ea"/><path d="M148.5 524V478" stroke="#6494ea" stroke-width="2"/><path d="M148.5 473 L152.0 480 L145.0 480Z" fill="#6494ea"/><path d="M440.5 200V154" stroke="#6494ea" stroke-width="2"/><path d="M440.5 149 L444.0 156 L437.0 156Z" fill="#6494ea"/><path d="M440.5 308V262" stroke="#6494ea" stroke-width="2"/><path d="M440.5 257 L444.0 264 L437.0 264Z" fill="#6494ea"/><path d="M440.5 416V370" stroke="#6494ea" stroke-width="2"/><path d="M440.5 365 L444.0 372 L437.0 372Z" fill="#6494ea"/><path d="M440.5 524V478" stroke="#6494ea" stroke-width="2"/><path d="M440.5 473 L444.0 480 L437.0 480Z" fill="#6494ea"/><path d="M148.5 92V82L343.5 74L440.5 82V92" stroke="#6494ea" stroke-width="2" fill="none" stroke-linejoin="miter"/><path d="M343.5 74V67" stroke="#6494ea" stroke-width="2"/><path d="M343.5 62.5 L347.3 70.5 L339.7 70.5Z" fill="#6494ea"/></svg>
<div class="t nl" style="left:624px;width:185px;top:288px;text-align:center">0FC_MC10</div>
<svg class="a" style="left:708px;top:269px" width="16" height="16"><use href="#i-mc"/></svg>
<div class="t nl" style="left:429px;width:185px;top:374px;text-align:center">0FC_C08</div>
<svg class="a" style="left:513px;top:355px" width="16" height="16"><use href="#i-cube"/></svg>
<div class="t nl" style="left:721px;width:185px;top:374px;text-align:center">0FC_C09</div>
<svg class="a" style="left:805px;top:355px" width="16" height="16"><use href="#i-cube"/></svg>
<div class="t nl" style="left:429px;width:185px;top:482px;text-align:center">0FC_DS06</div>
<svg class="a" style="left:513px;top:463px" width="16" height="16"><use href="#i-ds"/></svg>
<div class="t nl" style="left:721px;width:185px;top:482px;text-align:center">0FC_DS07</div>
<svg class="a" style="left:805px;top:463px" width="16" height="16"><use href="#i-ds"/></svg>
<div class="t nl" style="left:429px;width:185px;top:590px;text-align:center">0FC_DS05</div>
<svg class="a" style="left:513px;top:571px" width="16" height="16"><use href="#i-ds"/></svg>
<div class="t nl" style="left:721px;width:185px;top:590px;text-align:center">0FC_DS05</div>
<svg class="a" style="left:805px;top:571px" width="16" height="16"><use href="#i-ds"/></svg>
<div class="t nl" style="left:429px;width:185px;top:698px;text-align:center">0FC_BP_ITEMS</div>
<svg class="a" style="left:513px;top:679px" width="16" height="16"><use href="#i-src"/></svg>
<div class="t nl" style="left:721px;width:185px;top:698px;text-align:center">0FC_BP_ITEMS</div>
<svg class="a" style="left:805px;top:679px" width="16" height="16"><use href="#i-src"/></svg>
<div class="t nl" style="left:429px;width:185px;top:806px;text-align:center">0FC_BP_ITEMS</div>
<div class="t nl" style="left:429px;width:185px;top:818px;text-align:center">T90CLNT090</div>
<svg class="a" style="left:513px;top:787px" width="16" height="16"><use href="#i-fc"/></svg>
<div class="t nl" style="left:721px;width:185px;top:806px;text-align:center">0FC_BP_ITEMS</div>
<div class="t nl" style="left:721px;width:185px;top:818px;text-align:center">T90CLNT090</div>
<svg class="a" style="left:805px;top:787px" width="16" height="16"><use href="#i-fc"/></svg>
<svg class="a" style="left:514px;top:422px" width="13" height="11"><use href="#i-bt"/></svg>
<svg class="a" style="left:514px;top:530px" width="13" height="11"><use href="#i-bt"/></svg>
<svg class="a" style="left:528px;top:530px" width="12" height="11"><use href="#i-cmt"/></svg>
<svg class="a" style="left:514px;top:638px" width="13" height="11"><use href="#i-bt"/></svg>
<svg class="a" style="left:514px;top:746px" width="13" height="11"><use href="#i-bt"/></svg>
<svg class="a" style="left:806px;top:422px" width="13" height="11"><use href="#i-bt"/></svg>
<svg class="a" style="left:806px;top:530px" width="13" height="11"><use href="#i-bt"/></svg>
<svg class="a" style="left:820px;top:530px" width="12" height="11"><use href="#i-cmt"/></svg>
<svg class="a" style="left:806px;top:638px" width="13" height="11"><use href="#i-bt"/></svg>
<svg class="a" style="left:806px;top:746px" width="13" height="11"><use href="#i-bt"/></svg><!-- grid snap -->
<svg class="a" style="left:357px;top:203px" width="16" height="16" viewBox="0 0 16 16">
 <rect x="0.5" y="0.5" width="15" height="15" fill="#dce8f7" stroke="#c8c0b8"/>
 <path d="M4.5 0V16 M8.5 0V16 M12.5 0V16 M0 4.5H16 M0 8.5H16 M0 12.5H16" stroke="#c8c0b8"/>
 <path d="M8.5 1V15 M1 8.5H15" stroke="#000" stroke-width="1.4" stroke-dasharray="3 1"/>
</svg>
<!-- magnet -->
<svg class="a" style="left:387px;top:203px" width="16" height="16" viewBox="0 0 16 16">
 <path d="M3.5 1V15 M1 12.5H15.5" stroke="#111" stroke-width="1" stroke-dasharray="1.6 1"/>
 <path d="M6.5 8 V5 A4 4 0 0 1 14.5 5 V8 H12.5 V5 A2 2 0 0 0 8.5 5 V8Z" fill="#e43a30" stroke="#a82020" stroke-width="0.5"/>
 <rect x="6.5" y="8" width="2" height="2" fill="#a8b0b8"/><rect x="12.5" y="8" width="2" height="2" fill="#a8b0b8"/>
</svg>
<!-- T -->
<svg class="a" style="left:524px;top:204px" width="14" height="14" viewBox="0 0 14 14">
 <rect x="0.5" y="0.5" width="13" height="13" fill="#f8f8f8" stroke="#c8c8c8" stroke-width="0.8"/>
 <path d="M0 0H2.5V1H1V2.5H0Z M14 0H11.5V1H13V2.5H14Z M0 14H2.5V13H1V11.5H0Z M14 14H11.5V13H13V11.5H14Z" fill="#000"/>
 <path d="M2.5 2.5 H11.5 V5 H10.6 L10.2 3.8 H8 V11 H9.4 V12 H4.6 V11 H6 V3.8 H3.8 L3.4 5 H2.5Z" fill="#000"/>
</svg>
<!-- table magnifier -->
<svg class="a" style="left:553px;top:203px" width="17" height="17" viewBox="0 0 17 17">
 <rect x="2.5" y="1" width="14.5" height="12.5" fill="#000"/>
 <rect x="3.6" y="4.6" width="3.4" height="2" fill="#fff"/><rect x="3.6" y="7.6" width="3.4" height="2" fill="#fff"/><rect x="3.6" y="10.6" width="3.4" height="2" fill="#fff"/><rect x="3.6" y="2" width="3.4" height="1" fill="#e8e8e8"/><rect x="8" y="4.6" width="3.4" height="2" fill="#fff"/><rect x="8" y="7.6" width="3.4" height="2" fill="#fff"/><rect x="8" y="10.6" width="3.4" height="2" fill="#fff"/><rect x="8" y="2" width="3.4" height="1" fill="#e8e8e8"/><rect x="12.2" y="4.6" width="3.4" height="2" fill="#fff"/><rect x="12.2" y="7.6" width="3.4" height="2" fill="#fff"/><rect x="12.2" y="10.6" width="3.4" height="2" fill="#fff"/><rect x="12.2" y="2" width="3.4" height="1" fill="#e8e8e8"/>
 <path d="M7.6 11.8 L10.6 14.8" stroke="#604010" stroke-width="2.6" stroke-linecap="round"/>
 <path d="M7.6 11.8 L10.6 14.8" stroke="#e0a830" stroke-width="1.5" stroke-linecap="round"/>
 <circle cx="4.8" cy="9.2" r="3.6" fill="#d8f0ff" stroke="#90a8b8" stroke-width="1"/>
 <circle cx="4" cy="8.4" r="1.4" fill="#fff"/>
</svg>
<!-- db printer -->
<svg class="a" style="left:583px;top:203px" width="16" height="16" viewBox="0 0 16 16">
 <path d="M10.5 1.5 A4 4 0 0 1 15 5.5 V8 L11 10 V5Z" fill="#fff" stroke="#000" stroke-width="1"/>
 <path d="M12.5 2.5 L13.5 5" stroke="#1a70e8" stroke-width="1.4"/>
 <rect x="3.5" y="2.5" width="6" height="5" fill="#fff" stroke="#000" stroke-width="1"/>
 <path d="M1 10 V13 C1 15.3 11 15.3 11 13 V10Z" fill="#1a78ff" stroke="#000" stroke-width="1"/>
 <ellipse cx="6" cy="9.8" rx="5" ry="1.8" fill="#a8d8ff" stroke="#000" stroke-width="1"/>
 <path d="M3 12.5 H5 M6.5 12.5 H8.5" stroke="#cfe8ff" stroke-width="1"/>
</svg>
<!-- comment bubble -->
<svg class="a" style="left:613px;top:204px" width="16" height="14" viewBox="0 0 16 14">
 <path d="M1.5 1.5 H14.5 V10.5 H8 L5 13 V10.5 H1.5Z" fill="#f8f8f8" stroke="#a8a8a8" stroke-width="1"/>
 <rect x="2.5" y="2.5" width="11" height="3" fill="#e0e8f0"/>
 <rect x="4.5" y="5" width="1.5" height="1.5" fill="#3a8ac8"/><rect x="7.3" y="5" width="1.5" height="1.5" fill="#3a8ac8"/><rect x="10" y="5" width="1.5" height="1.5" fill="#3a8ac8"/>
</svg>
<!-- layers add -->
<svg class="a" style="left:650px;top:203px" width="17" height="16" viewBox="0 0 17 16">
 <path d="M4 1.5 H12 L15.5 5 L12 6.5 H4 L0.5 5Z" fill="#9fd0f8" stroke="#3c8ad8" stroke-width="1"/>
 <path d="M0.5 8 L4 6.5 H12 L15.5 8 L12 10 H4Z" fill="#80c0f0" stroke="#3c8ad8" stroke-width="1"/>
 <path d="M0.5 11.5 L4 10 H12 L15.5 11.5 V15.2 H0.5Z" fill="#5aa8e8" stroke="#1e5a98" stroke-width="1"/>
 <rect x="0.5" y="14.5" width="15" height="1.2" fill="#303838"/>
 <path d="M10 9 H13 V7.5 H15 V9 H16.5 V11 H15 V14 H13 V12.5 H10Z" fill="#f0f020" stroke="#107810" stroke-width="1"/>
</svg>
<!-- purple layers -->
<svg class="a" style="left:680px;top:203px" width="17" height="15" viewBox="0 0 17 15">
 <path d="M4 0.8 H12.5 L16 4 L12.5 5.5 H4 L0.5 4Z" fill="#c890f8" stroke="#9a50e8" stroke-width="1"/>
 <path d="M0.5 7 L4 5.5 H12.5 L16 7 L12.5 9 H4Z" fill="#b070f0" stroke="#2a10d8" stroke-width="1.1"/>
 <path d="M0.5 11 L4 9.5 H12.5 L16 11 L12.5 13.5 H4Z" fill="#c890f8" stroke="#2a10d8" stroke-width="1.3"/>
</svg>
<!-- color grid -->
<svg class="a" style="left:712px;top:205px" width="12" height="12"><rect x="0" y="0" width="3" height="3" fill="#f45050"/><rect x="4" y="0" width="3" height="3" fill="#fa9a48"/><rect x="8" y="0" width="3" height="3" fill="#f4cc50"/><rect x="0" y="4" width="3" height="3" fill="#d4eaa0"/><rect x="4" y="4" width="3" height="3" fill="#38c048"/><rect x="8" y="4" width="3" height="3" fill="#50a8f0"/><rect x="0" y="8" width="3" height="3" fill="#4060a8"/><rect x="4" y="8" width="3" height="3" fill="#e098e0"/><rect x="8" y="8" width="3" height="3" fill="#f05890"/></svg>
<!-- zoom in / fit / out -->
<svg class="a" style="left:747px;top:203px" width="17" height="16" viewBox="0 0 17 16">
 <path d="M2 14 L7 9" stroke="#9a7020" stroke-width="3.4" stroke-linecap="round"/><path d="M2 14 L7 9" stroke="#e0a840" stroke-width="2" stroke-linecap="round"/>
 <circle cx="10.5" cy="5.5" r="4.8" fill="#e8f4fa" stroke="#8aa0a8" stroke-width="1.1"/>
 <path d="M8 5.5 H13 M10.5 3 V8" stroke="#1a70e8" stroke-width="1.4"/>
</svg>
<svg class="a" style="left:777px;top:203px" width="17" height="16" viewBox="0 0 17 16">
 <path d="M2 14 L7 9" stroke="#9a7020" stroke-width="3.4" stroke-linecap="round"/><path d="M2 14 L7 9" stroke="#e0a840" stroke-width="2" stroke-linecap="round"/>
 <circle cx="10.5" cy="5.5" r="4.8" fill="#e8f4fa" stroke="#8aa0a8" stroke-width="1.1"/>
 <path d="M8.3 4.5 V3.3 H9.5 M11.5 3.3 H12.7 V4.5 M12.7 6.5 V7.7 H11.5 M9.5 7.7 H8.3 V6.5" stroke="#1a70e8" stroke-width="1.1" fill="none"/>
</svg>
<svg class="a" style="left:807px;top:203px" width="17" height="16" viewBox="0 0 17 16">
 <path d="M2 14 L7 9" stroke="#9a7020" stroke-width="3.4" stroke-linecap="round"/><path d="M2 14 L7 9" stroke="#e0a840" stroke-width="2" stroke-linecap="round"/>
 <circle cx="10.5" cy="5.5" r="4.8" fill="#e8f4fa" stroke="#8aa0a8" stroke-width="1.1"/>
 <path d="M8 5.5 H13" stroke="#1a70e8" stroke-width="1.4"/>
</svg>
<!-- layout -->
<svg class="a" style="left:844px;top:203px" width="26" height="16" viewBox="0 0 26 16">
 <g stroke="#fff" stroke-width="1" fill="none"><path d="M0.5 2.6H5 M11 2.6H15.5 M0.5 7.5H5 M11 7.5H15.5 M0.5 12.5H5 M11 12.5H15.5"/>
 <path d="M2.2 1 L0.6 2.6 L2.2 4.2 M13.8 1 L15.4 2.6 L13.8 4.2 M2.2 5.9 L0.6 7.5 L2.2 9.1 M13.8 5.9 L15.4 7.5 L13.8 9.1 M2.2 10.9 L0.6 12.5 L2.2 14.1 M13.8 10.9 L15.4 12.5 L13.8 14.1"/></g>
 <rect x="5.5" y="0.5" width="5" height="15" fill="#eee" stroke="#000" stroke-width="1.2"/>
 <path d="M5.5 5.5H10.5 M5.5 10.5H10.5" stroke="#000" stroke-width="1.2"/>
 <path d="M19 6 H24.5 L21.75 9Z" fill="#1c3a6c"/>
</svg>
<!-- magic wand -->
<svg class="a" style="left:883px;top:203px" width="17" height="17" viewBox="0 0 17 17">
 <path d="M0.3 2.5 L3.8 4.7 L7.3 2.5 L5.1 6.0 L7.3 9.5 L3.8 7.3 L0.3 9.5 L2.5 6.0ZM6.0 0.4 L9.2 2.4 L12.4 0.4 L10.4 3.6 L12.4 6.8 L9.2 4.8 L6.0 6.8 L8.0 3.6ZM10.5 3.6 L13.1 5.2 L15.7 3.6 L14.1 6.2 L15.7 8.8 L13.1 7.2 L10.5 8.8 L12.1 6.2Z" fill="#ffc040" stroke="#f89028" stroke-width="0.8" stroke-linejoin="round"/>
 <circle cx="4" cy="6" r="1.2" fill="#fff0a0"/><circle cx="9.2" cy="3.8" r="1" fill="#fff0a0"/>
 <path d="M6 7.8 L13.6 14.4" stroke="#6a78a8" stroke-width="2.8" stroke-linecap="round"/>
 <path d="M5.6 7.6 L8 9.8" stroke="#e8ecff" stroke-width="1.4" stroke-linecap="round"/>
</svg>
<!-- word -->
<svg class="a" style="left:920px;top:203px" width="17" height="16" viewBox="0 0 17 16">
 <rect x="1" y="1" width="13" height="13" fill="#fff" stroke="#1a60b0" stroke-width="2"/>
 <rect x="1" y="1" width="13" height="2" fill="#1a60b0"/>
 <path d="M2.5 5 L4 11 L6 7 L7.5 11 L10 4.5" stroke="#1a60b0" stroke-width="1.8" fill="none"/>
 <path d="M10.5 11.5 H13 V9.5 L16.5 12.5 L13 15.5 V13.5 H10.5Z" fill="#40c0e0" stroke="#2080b0" stroke-width="0.6"/>
</svg>
<!-- image -->
<svg class="a" style="left:950px;top:205px" width="16" height="12" viewBox="0 0 16 12">
 <rect x="0.5" y="0.5" width="15" height="11" fill="#fff" stroke="#a8a8a8"/>
 <rect x="2" y="2" width="12" height="8" fill="#4a90e0"/>
 <path d="M2 10 V7.5 L5 6 L7 3.5 L9 6.5 L12 5.5 L14 7 V10Z" fill="#8a4a3a"/>
 <rect x="2" y="8.5" width="12" height="1.5" fill="#2a5a30"/>
</svg>
<!-- printer -->
<svg class="a" style="left:980px;top:203px" width="16" height="16" viewBox="0 0 16 16">
 <path d="M3.5 0.8 H9.5 L12 6 H6Z" fill="#cce8ff" stroke="#8080c0" stroke-width="0.8"/>
 <path d="M0.8 8 L3 5.5 H13 L15.2 8 V12.5 L13 14.8 H3 L0.8 12.5Z" fill="#d8d8d8" stroke="#909090" stroke-width="0.8"/>
 <path d="M0.8 8 H15.2" stroke="#f4f4f4" stroke-width="1.2"/>
 <path d="M3 12 H13" stroke="#a8a8a8" stroke-width="1"/>
 <rect x="11" y="9" width="2" height="1" fill="#40c040"/>
</svg>


<!-- comments -->
<div class="a" style="left:979px;top:224px;width:223px;height:651px;border:1px solid #8aa2c2;border-radius:3px;background:#cfddee"></div>
<div class="a" style="left:980px;top:225px;width:221px;height:19px;background:linear-gradient(#d9e7f8,#c9dbf1);border-bottom:1px solid #a6bcd8;border-radius:2px 2px 0 0"></div>
<div class="t" style="left:991px;top:227px;color:#203c6c;letter-spacing:-0.15px">Comments</div>
<div class="a" style="left:980px;top:244px;width:203px;height:630px;overflow:hidden">
<svg class="a" style="left:4px;top:7px" width="13" height="11"><use href="#i-bt"/></svg>
<div class="t b" style="left:22px;top:5px;color:#15294d;letter-spacing:0.3px">0FC_DS05 -&gt; 0FC_DS07</div>
<div class="a" style="left:1px;top:22px;width:202px;height:79px;border:1px solid #8ea3c0;background:#cfddee"></div>
<svg class="a" style="left:4px;top:107px" width="13" height="11"><use href="#i-bt"/></svg>
<div class="t b" style="left:22px;top:105px;color:#15294d;letter-spacing:0.3px">0FC_DS07 -&gt; 0FC_C09</div>
<div class="a" style="left:1px;top:122px;width:202px;height:79px;border:1px solid #8ea3c0;background:#cfddee"></div>
<svg class="a" style="left:4px;top:207px" width="13" height="11"><use href="#i-bt"/></svg>
<div class="t b" style="left:22px;top:205px;color:#15294d;letter-spacing:0.3px">0FC_DS05 -&gt; 0FC_DS06</div>
<div class="a" style="left:1px;top:222px;width:202px;height:79px;border:1px solid #8ea3c0;background:#cfddee"></div>
<svg class="a" style="left:4px;top:307px" width="13" height="11"><use href="#i-bt"/></svg>
<div class="t b" style="left:22px;top:305px;color:#15294d;letter-spacing:0.3px">0FC_DS06 -&gt; 0FC_C08</div>
<div class="a" style="left:1px;top:322px;width:202px;height:79px;border:1px solid #8ea3c0;background:#cfddee"></div>
<svg class="a" style="left:4px;top:407px" width="13" height="11"><use href="#i-bt"/></svg>
<div class="t b" style="left:22px;top:405px;color:#15294d;letter-spacing:0.3px">0FC_BP_ITEMS/T90CLNT090 -&gt; 0FC_BP_ITEMS</div>
<div class="a" style="left:1px;top:422px;width:202px;height:79px;border:1px solid #8ea3c0;background:#cfddee"></div>
<svg class="a" style="left:4px;top:507px" width="13" height="11"><use href="#i-bt"/></svg>
<div class="t b" style="left:22px;top:505px;color:#15294d;letter-spacing:0.3px">0FC_BP_ITEMS/T90CLNT090 -&gt; 0FC_BP_ITEMS</div>
<div class="a" style="left:1px;top:522px;width:202px;height:79px;border:1px solid #8ea3c0;background:#cfddee"></div>
<svg class="a" style="left:4px;top:607px" width="13" height="11"><use href="#i-bt"/></svg>
<div class="t b" style="left:22px;top:605px;color:#15294d;letter-spacing:0.3px">0FC_BP_ITEMS -&gt; 0FC_DS05</div>
<div class="a" style="left:1px;top:622px;width:202px;height:79px;border:1px solid #8ea3c0;background:#cfddee"></div>
</div>
<div class="a" style="left:1183px;top:244px;width:18px;height:630px;background:linear-gradient(90deg,#d3dfee,#dfe8f3)"></div>
<svg class="a" style="left:1186px;top:250px" width="11" height="7"><path d="M0.5 6 L5.5 0.5 L10.5 6Z" fill="#4a5577"/></svg>
<div class="a" style="left:1184px;top:262px;width:15px;height:177px;border:1px solid #8fa8c8;border-radius:3px;background:linear-gradient(90deg,#e6edf7,#d0ddee)"></div>
<svg class="a" style="left:1187px;top:346px" width="9" height="8"><g fill="#7f97b7"><rect x="0" y="0" width="8" height="1"/><rect x="0" y="2" width="8" height="1"/><rect x="0" y="4" width="8" height="1"/><rect x="0" y="6" width="8" height="1"/></g></svg>
<svg class="a" style="left:1186px;top:861px" width="11" height="7"><path d="M0.5 0.5 L5.5 6 L10.5 0.5Z" fill="#4a5577"/></svg>

<!-- status -->
<div class="a" style="left:25px;top:880px;width:1177px;height:22px;border:1px solid #c6c3c0"></div>
<svg class="a" style="left:1207px;top:906px" width="12" height="12"><g fill="#7890b0"><rect x="8" y="2" width="2" height="2"/><rect x="4" y="6" width="2" height="2"/><rect x="8" y="6" width="2" height="2"/><rect x="0" y="10" width="2" height="2"/><rect x="4" y="10" width="2" height="2"/><rect x="8" y="10" width="2" height="2"/></g></svg>
</body></html>
